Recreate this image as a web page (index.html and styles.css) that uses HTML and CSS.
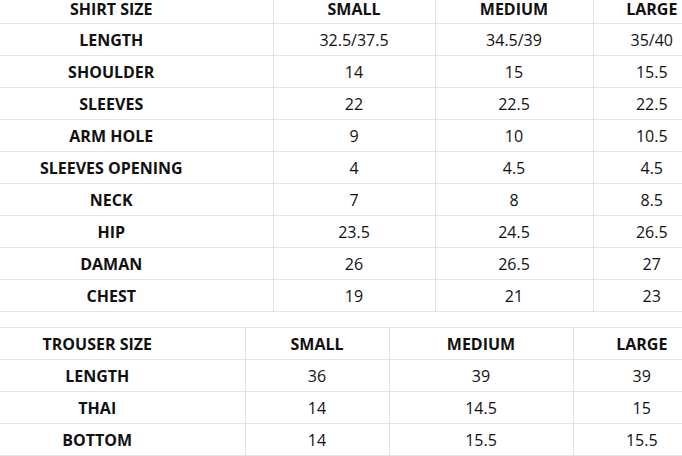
FILE: index.html
```html
<!DOCTYPE html>
<html>
<head>
<meta charset="utf-8">
<link rel="stylesheet" href="styles.css">
</head>
<body>
<div class="sheet">
  <table class="size-table shirt">
    <colgroup>
      <col class="c-323"><col class="c-162"><col class="c-158"><col class="c-117">
    </colgroup>
    <tr class="head-cut"><th>SHIRT SIZE</th><th>SMALL</th><th>MEDIUM</th><th>LARGE</th></tr>
    <tr><th>LENGTH</th><td>32.5/37.5</td><td>34.5/39</td><td>35/40</td></tr>
    <tr><th>SHOULDER</th><td>14</td><td>15</td><td>15.5</td></tr>
    <tr><th>SLEEVES</th><td>22</td><td>22.5</td><td>22.5</td></tr>
    <tr><th>ARM HOLE</th><td>9</td><td>10</td><td>10.5</td></tr>
    <tr><th>SLEEVES OPENING</th><td>4</td><td>4.5</td><td>4.5</td></tr>
    <tr><th>NECK</th><td>7</td><td>8</td><td>8.5</td></tr>
    <tr><th>HIP</th><td>23.5</td><td>24.5</td><td>26.5</td></tr>
    <tr><th>DAMAN</th><td>26</td><td>26.5</td><td>27</td></tr>
    <tr><th>CHEST</th><td>19</td><td>21</td><td>23</td></tr>
  </table>
  <table class="size-table trouser">
    <colgroup>
      <col class="c-295"><col class="c-144"><col class="c-184"><col class="c-137">
    </colgroup>
    <tr><th>TROUSER SIZE</th><th>SMALL</th><th>MEDIUM</th><th>LARGE</th></tr>
    <tr><th>LENGTH</th><td>36</td><td>39</td><td>39</td></tr>
    <tr><th>THAI</th><td>14</td><td>14.5</td><td>15</td></tr>
    <tr><th>BOTTOM</th><td>14</td><td>15.5</td><td>15.5</td></tr>
  </table>
</div>
</body>
</html>
```

FILE: styles.css
```css
html, body {
  margin: 0;
  padding: 0;
  background: #ffffff;
  overflow: hidden;
}
body {
  font-family: "Open Sans", "DejaVu Sans", sans-serif;
  color: #111111;
}
.sheet {
  width: 760px;
  margin-left: -50px;
  display: flex;
  flex-direction: column;
  gap: 15px;
}
.size-table {
  width: 760px;
  table-layout: fixed;
  border-collapse: collapse;
}
.trouser {
  border-top: 1px solid #e2e2e2;
}
.size-table th, .size-table td {
  height: 31px;
  padding: 0;
  text-align: center;
  vertical-align: middle;
  font-size: 16px;
  line-height: 20px;
  border-bottom: 1px solid #e2e2e2;
  border-left: 1px solid #e2e2e2;
}
.size-table .head-cut th {
  height: 22px;
  padding-top: 1px;
  line-height: 16px;
  vertical-align: top;
}
.size-table th:first-child { border-left: none; }
.size-table th { font-weight: 700; }
.size-table td { font-weight: 400; }
.c-323 { width: 323px; }
.c-162 { width: 162px; }
.c-158 { width: 158px; }
.c-117 { width: 117px; }
.c-295 { width: 295px; }
.c-144 { width: 144px; }
.c-184 { width: 184px; }
.c-137 { width: 137px; }
```
